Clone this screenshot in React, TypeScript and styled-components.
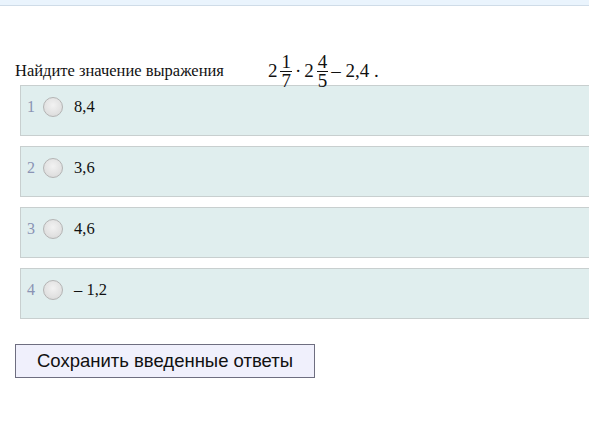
import React from "react";
import styled, { createGlobalStyle } from "styled-components";

const Global = createGlobalStyle`
  html, body { margin: 0; padding: 0; background: #ffffff; overflow: hidden; }
  body { font-family: "Liberation Serif", "Times New Roman", serif; color: #111; }
`;

const TopBar = styled.div`
  height: 5px;
  background: #eaf4fd;
  border-bottom: 1px solid #cfdce8;
`;

const Content = styled.div`
  padding: 0 0 0 15px;
`;

const Question = styled.div`
  position: relative;
  z-index: 1;
  display: flex;
  align-items: center;
  height: 20px;
  margin-top: 55px;
  font-size: 16.5px;
  white-space: nowrap;
`;

const Math = styled.span`
  display: inline-flex;
  align-items: center;
  margin-left: 44px;
  font-size: 19px;
`;

const Frac = styled.span`
  display: inline-flex;
  flex-direction: column;
  align-items: center;
  font-size: 19px;
  line-height: 18px;
  margin: 0 2px 0 3px;
`;

const Num = styled.span`
  padding: 0 1px;
  border-bottom: 1px solid #111;
`;

const Den = styled.span`
  padding: 0 1px;
`;

const Dot = styled.span`
  margin: 0 3px 0 1px;
`;

const Tail = styled.span`
  margin-left: 1px;
  white-space: pre;
`;

const Answers = styled.div`
  margin: 4px 0 0 5px;
  width: 620px;
  display: flex;
  flex-direction: column;
  gap: 10px;
`;

const Answer = styled.label`
  display: flex;
  align-items: flex-start;
  height: 49px;
  box-sizing: content-box;
  border: 1px solid #c8cfcf;
  background: #e0eeee;
  padding: 0 0 0 6px;
`;

const Row = styled.span`
  display: flex;
  align-items: center;
  height: 22px;
  margin-top: 10px;
`;

const Index = styled.span`
  font-size: 16px;
  color: #8a93b4;
  width: 16px;
`;

const Radio = styled.span`
  width: 20px;
  height: 20px;
  border-radius: 50%;
  box-sizing: border-box;
  border: 1px solid #b4b4b4;
  background: radial-gradient(circle at 50% 40%, #f2f2f2 0%, #e2e2e2 60%, #d4d4d4 100%);
  margin-right: 11px;
`;

const AnswerText = styled.span`
  font-size: 16.5px;
  color: #111;
`;

const SaveButton = styled.button`
  display: block;
  margin-top: 25px;
  width: 300px;
  height: 34px;
  background: #f0f0fc;
  border: 1px solid #6e6e80;
  font-family: "Liberation Sans", Arial, sans-serif;
  font-size: 18.5px;
  color: #111;
  padding: 0;
  cursor: pointer;
`;

const answers = ["8,4", "3,6", "4,6", "\u2013 1,2"];

export default function App() {
  return (
    <>
      <Global />
      <TopBar />
      <Content>
        <Question>
          <span>Найдите значение выражения</span>
          <Math>
            <span>2</span>
            <Frac>
              <Num>1</Num>
              <Den>7</Den>
            </Frac>
            <Dot>·</Dot>
            <span>2</span>
            <Frac>
              <Num>4</Num>
              <Den>5</Den>
            </Frac>
            <Tail>{"\u2013 2,4 ."}</Tail>
          </Math>
        </Question>
        <Answers>
          {answers.map((a, i) => (
            <Answer key={i}>
              <Row>
                <Index>{i + 1}</Index>
                <Radio />
                <AnswerText>{a}</AnswerText>
              </Row>
            </Answer>
          ))}
        </Answers>
        <SaveButton>Сохранить введенные ответы</SaveButton>
      </Content>
    </>
  );
}
